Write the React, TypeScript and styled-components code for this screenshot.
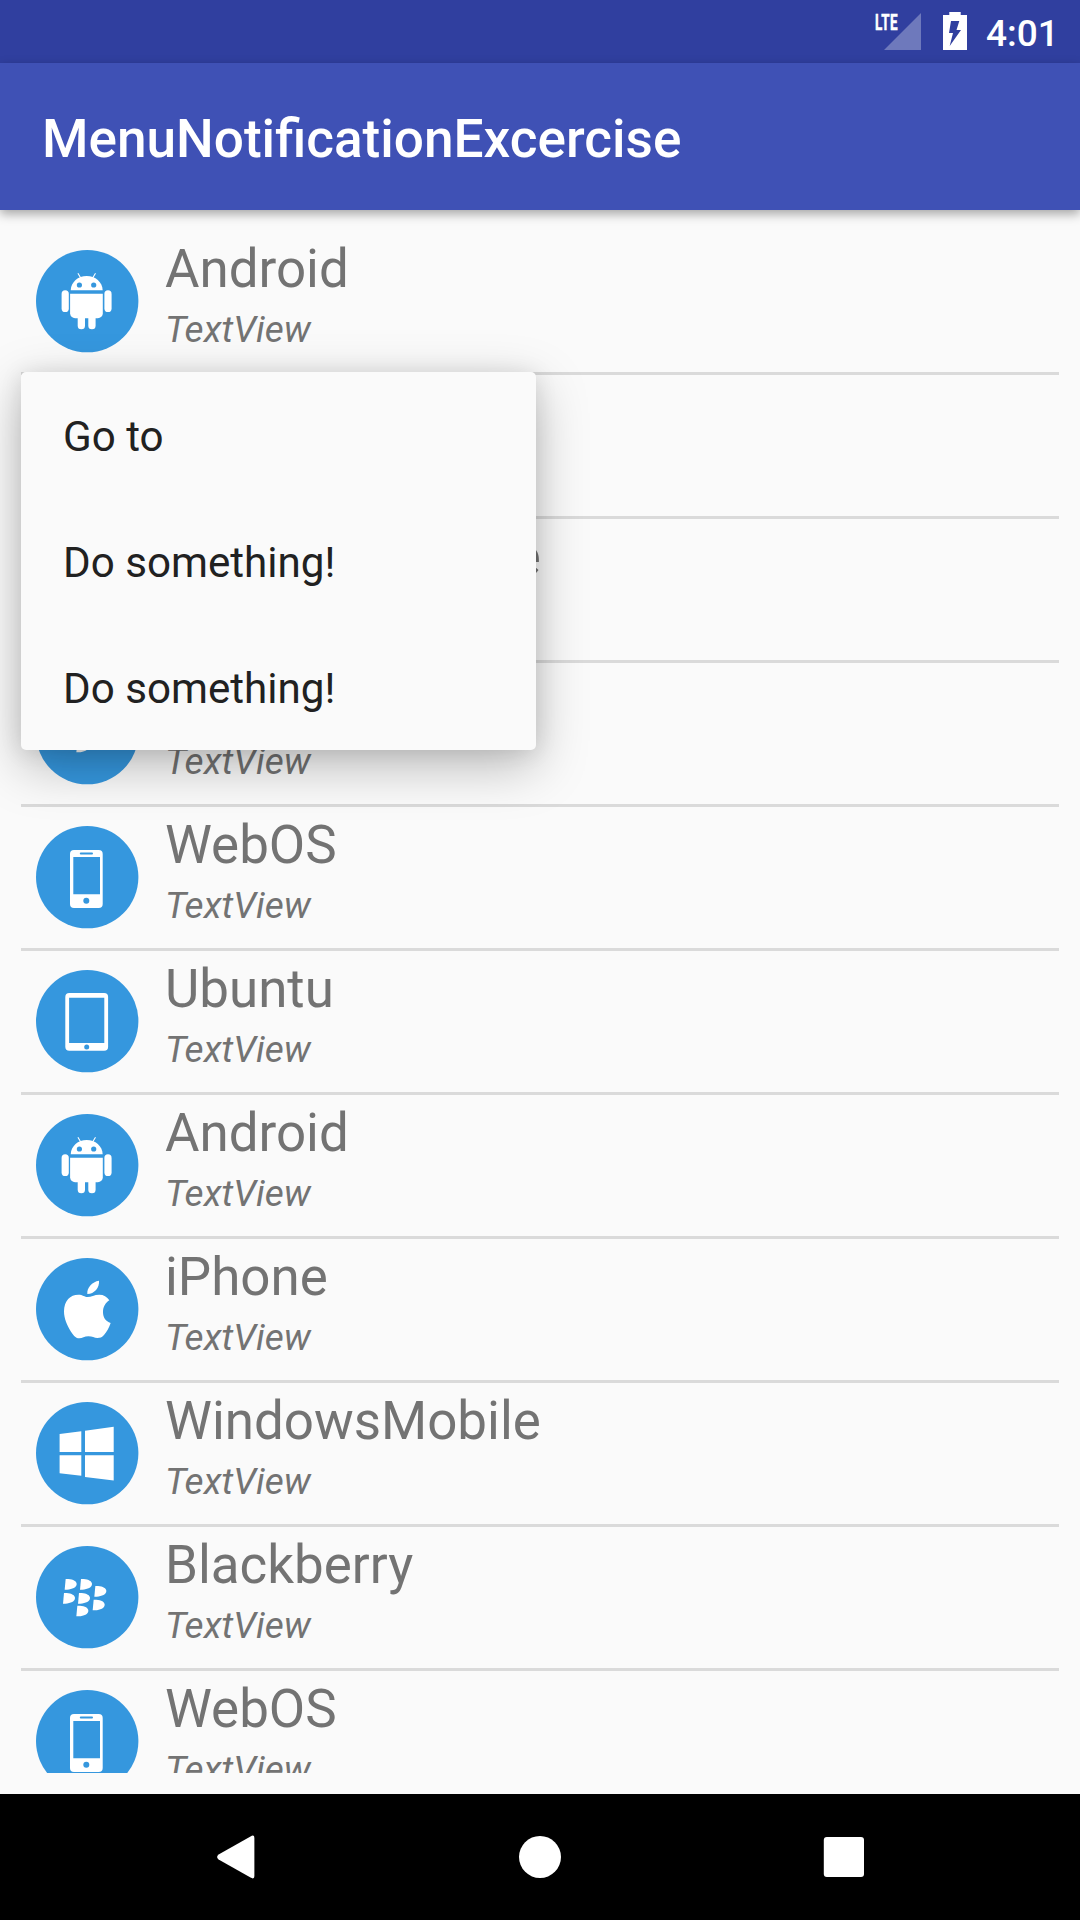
import React from 'react';
import styled, { createGlobalStyle } from 'styled-components';

const BLUE = '#3597de';

const GlobalStyle = createGlobalStyle`
  *, *::before, *::after { box-sizing: border-box; }
  body { margin: 0; background: #fafafa; font-family: Roboto, "Noto Sans", sans-serif; }
  svg { display: block; flex: none; }
`;

const Screen = styled.div`
  position: relative;
  display: flex;
  flex-direction: column;
  width: 1080px;
  height: 1920px;
  overflow: hidden;
  background: #fafafa;
`;

const StatusBar = styled.header`
  display: flex;
  align-items: flex-start;
  justify-content: flex-end;
  height: 63px;
  padding: 12px 24px 0 0;
  background: #303f9f;
  color: #fff;
`;

const Network = styled.div`
  display: flex;
  align-items: flex-start;
  padding-top: 1px;
  margin-right: 22px;
`;

const NetworkType = styled.span`
  width: 24px;
  margin-right: -15px;
  font-size: 22.5px;
  font-weight: 700;
  line-height: 18px;
  letter-spacing: 0.6px;
  white-space: nowrap;
  -webkit-text-stroke: 0.5px #fff;
  transform: scaleX(0.6);
  transform-origin: 0 0;
  z-index: 1;
`;

const Clock = styled.time`
  width: 70px;
  margin-left: 19px;
  font-size: 37px;
  font-weight: 500;
  line-height: 44px;
  white-space: nowrap;
`;

const AppBar = styled.div`
  position: relative;
  z-index: 1;
  display: flex;
  align-items: center;
  height: 147px;
  padding: 4px 42px 0;
  background: #3f51b5;
  box-shadow: 0 4px 10px rgba(0, 0, 0, 0.34);
`;

const AppTitle = styled.h1`
  margin: 0;
  color: #fff;
  font-size: 53.15px;
  font-weight: 500;
  line-height: 62px;
`;

const Content = styled.main`
  height: 1584px;
  padding: 21px;
`;

const List = styled.ul`
  height: 1542px;
  margin: 0;
  padding: 0;
  overflow: hidden;
  list-style: none;
`;

const Row = styled.li`
  display: flex;
  align-items: flex-start;
  height: 144px;
  padding-left: 15px;
  border-bottom: 3px solid #dadada;
`;

const Badge = styled.svg`
  width: 104px;
  height: 105px;
  margin-top: 18px;
`;

const Labels = styled.div`
  display: flex;
  flex-direction: column;
  padding-left: 25px;
  color: #737373;
`;

const Name = styled.span`
  font-size: 52.9px;
  line-height: 76px;
`;

const Detail = styled.span`
  font-size: 37px;
  font-style: italic;
  line-height: 45px;
`;

const Popup = styled.div`
  position: absolute;
  z-index: 2;
  top: 372px;
  left: 21px;
  width: 515px;
  border-radius: 5px;
  background: #fafafa;
  box-shadow: 0 16px 52px rgba(0, 0, 0, 0.26), 0 2px 22px rgba(0, 0, 0, 0.1);
`;

const PopupItem = styled.div`
  display: flex;
  align-items: center;
  height: 126px;
  padding: 3px 42px 0;
  color: #212121;
  font-size: 42.15px;
  line-height: 50px;
`;

const NavBar = styled.nav`
  display: flex;
  align-items: center;
  justify-content: space-between;
  height: 126px;
  padding: 0 215px;
  background: #000;
`;

type Platform = 'android' | 'apple' | 'windows' | 'blackberry' | 'phone' | 'tablet';

const berries = [
  [136, 147], [182, 147], [225, 168], [131, 189], [176, 189], [220, 209], [171, 227],
];

const glyphs: Record<Platform, React.ReactNode> = {
  android: (
    <>
      <path d="M34.7 41.3C35 33 42 27 50.7 27s15.7 6 16 14.3Z" />
      <path d="m41.9 24.2 3 5M59.5 24.2l-3 5" stroke="#fff" strokeWidth="1.1" />
      <circle cx="43.4" cy="36" r="2.6" fill={BLUE} />
      <circle cx="57.7" cy="36" r="2.6" fill={BLUE} />
      <rect x="25.6" y="41.3" width="7.2" height="21.7" rx="3.6" />
      <rect x="68.4" y="41.3" width="7.2" height="21.7" rx="3.6" />
      <path d="M34.1 44.7h32.7v19.6a5 5 0 0 1-5 5H39.1a5 5 0 0 1-5-5Z" />
      <rect x="41.7" y="62" width="7.3" height="18.3" rx="3.6" />
      <rect x="52.3" y="62" width="7.3" height="18.3" rx="3.6" />
    </>
  ),
  apple: (
    <g transform="translate(-16 -17) scale(.33333)">
      <path d="M237 122c2 20-14 40-35 40-2-18 14-37 35-40Z" />
      <path d="M203 171c10 0 20-7 35-7 13 0 23 6 30 17-12 8-19 20-19 35 0 16 8 28 23 33-5 15-12 27-20 36-6 7-12 9-20 9-9 0-15-5-27-5s-18 6-27 6c-10 0-18-9-25-20-12-18-21-40-21-61 0-32 19-50 43-50 13 0 19 7 28 7Z" />
    </g>
  ),
  windows: (
    <path d="m23.6 33 21.7-2.8V51H23.6ZM49 29.7l28.7-4V51H49ZM23.6 54.3h21.7v20.4l-21.7-2.5ZM49 54.3h28.7v25.1L49 76Z" />
  ),
  blackberry: (
    <g transform="translate(-16 -15) scale(.33333)">
      {berries.map(([x, y]) => (
        <path key={`${x}-${y}`} d={`M${x + 1} ${y}h8c15 1 25 7 25 15 0 10-13 16-29 17h-7Z`} />
      ))}
    </g>
  ),
  phone: (
    <>
      <rect x="34" y="25" width="32.7" height="58" rx="4" />
      <path fill={BLUE} d="M37.3 32H64v37.3H37.3Z" />
      <rect x="43.8" y="27.4" width="13.2" height="2" rx="1" fill={BLUE} />
      <circle cx="50.3" cy="75.7" r="3" fill={BLUE} />
    </>
  ),
  tablet: (
    <>
      <rect x="29.3" y="24" width="42.8" height="57.8" rx="4" />
      <path fill={BLUE} d="M33.1 28.7h35.2V74H33.1Z" />
      <circle cx="50.7" cy="78" r="2.5" fill={BLUE} />
    </>
  ),
};

const rows: { name: string; icon: Platform }[] = [
  { name: 'Android', icon: 'android' },
  { name: 'iPhone', icon: 'apple' },
  { name: 'WindowsMobile', icon: 'windows' },
  { name: 'Blackberry', icon: 'blackberry' },
  { name: 'WebOS', icon: 'phone' },
  { name: 'Ubuntu', icon: 'tablet' },
  { name: 'Android', icon: 'android' },
  { name: 'iPhone', icon: 'apple' },
  { name: 'WindowsMobile', icon: 'windows' },
  { name: 'Blackberry', icon: 'blackberry' },
  { name: 'WebOS', icon: 'phone' },
];

const actions = ['Go to', 'Do something!', 'Do something!'];

export default function App() {
  return (
    <Screen>
      <GlobalStyle />
      <StatusBar>
        <Network>
          <NetworkType>LTE</NetworkType>
          <svg width="37" height="37" viewBox="0 0 37 37">
            <path d="M37 0v37H0Z" fill="#fff" fillOpacity=".3" />
          </svg>
        </Network>
        <svg width="24" height="38" viewBox="0 0 24 38">
          <path
            fill="#fff"
            fillRule="evenodd"
            d="M6.3 0h11.4v3H24v35H0V3h6.3ZM8 9 6 21h4L6.7 34 18 18h-4.5L16.3 9Z"
          />
        </svg>
        <Clock>4:01</Clock>
      </StatusBar>
      <AppBar>
        <AppTitle>MenuNotificationExcercise</AppTitle>
      </AppBar>
      <Content>
        <List>
          {rows.map((row, index) => (
            <Row key={index}>
              <Badge viewBox="0 0 104 105" fill="#fff">
                <circle cx="51.2" cy="52.1" r="51.2" fill={BLUE} />
                {glyphs[row.icon]}
              </Badge>
              <Labels>
                <Name>{row.name}</Name>
                <Detail>TextView</Detail>
              </Labels>
            </Row>
          ))}
        </List>
      </Content>
      <NavBar>
        <svg width="42" height="44" viewBox="0 0 42 44">
          <path d="M35.5 1.4Q39.4-.8 39.4 3v38q0 3.8-3.9 1.6L3.6 24.5q-3-2.5 0-5Z" fill="#fff" />
        </svg>
        <svg width="42" height="42" viewBox="0 0 42 42">
          <circle cx="21" cy="21" r="21" fill="#fff" />
        </svg>
        <svg width="42" height="42" viewBox="0 0 42 42">
          <rect x=".8" y="1" width="40.2" height="40" rx="3" fill="#fff" />
        </svg>
      </NavBar>
      <Popup>
        {actions.map((label, index) => (
          <PopupItem key={index}>{label}</PopupItem>
        ))}
      </Popup>
    </Screen>
  );
}
